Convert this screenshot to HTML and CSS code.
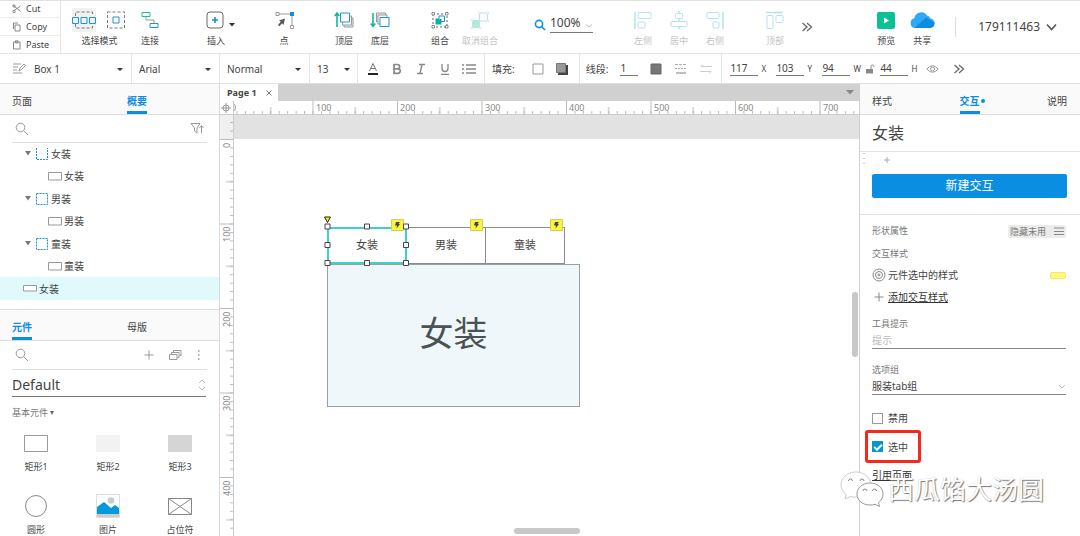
FILE: index.html
```html
<!DOCTYPE html>
<html lang="zh-CN">
<head>
<meta charset="utf-8">
<title>Page 1</title>
<link rel="stylesheet" href="styles.css">
</head>
<body>
<div class="app">
  <header class="ribbon">
    <div class="clipboard">
      <button class="clip"><svg width="10" height="10" viewBox="0 0 10 10"><path d="M1.500 1.500L8.500 7.500M1.500 7L8.500 2"/><circle cx="2" cy="2" r="1.200"/><circle cx="2" cy="7.500" r="1.200"/></svg>Cut</button>
      <button class="clip"><svg width="10" height="10" viewBox="0 0 10 10"><path d="M3 3h5v6H3zM1.500 7V1H6"/></svg>Copy</button>
      <button class="clip"><svg width="10" height="10" viewBox="0 0 10 10"><path d="M1.500 2h6.500v7H1.500zM3.500 .8h2.500V3H3.500z"/></svg>Paste</button>
    </div>
    <button class="tool tool-mode">
      <span class="icons">
        <svg class="pressed" width="24" height="24" viewBox="0 0 24 24" fill="none"><path d="M3.500 8V4h17v4M3.500 16v4h17v-4" stroke="#777" stroke-dasharray="3 2"/><g stroke="#1d93e3" fill="#f1f1f1"><path d="M.5 9.500h6v6h-6zM9 9.500h6v6H9zM17.500 9.500h6v6h-6z"/></g></svg>
        <svg width="24" height="24" viewBox="0 0 24 24" fill="none"><path d="M3.500 4h17v16h-17z" stroke="#777" stroke-dasharray="3 2"/><path d="M9 9h6v6H9z" stroke="#1d93e3"/></svg>
      </span>
      选择模式
    </button>
    <button class="tool gap-xs"><svg width="24" height="24" viewBox="0 0 24 24" fill="none"><path d="M4 4.500h8v4H4z" stroke="#12c19c"/><path d="M8 9v3h8v3" stroke="#999"/><path d="M12 15.500h8v4h-8z" stroke="#1d93e3"/></svg>连接</button>
    <button class="tool tool-narrow"><svg width="24" height="24" viewBox="0 0 24 24" fill="none"><rect x="3" y="4" width="16" height="16" rx="3" stroke="#666"/><path d="M11 9v6M8 12h6" stroke="#0e8fe3" stroke-width="1.600"/></svg>插入</button>
    <svg class="caret" width="8" height="4" viewBox="0 0 8 4"><path d="M1 0h6L4 3.500z"/></svg>
    <button class="tool"><svg width="24" height="24" viewBox="0 0 24 24" fill="none"><path d="M6 6h14v13" stroke="#999"/><path d="M4 4.500h3v3H4zM18.500 17.500h3v3h-3z" fill="#fff" stroke="#999"/><path d="M18 4h4v4h-4z" fill="#0e8fe3"/><path d="M13 10.500l-6 2 1.800 1.200L6 17l1.200 1.200 3-3L11.500 17z" fill="#555"/></svg>点</button>
    <button class="tool gap-md"><svg width="24" height="24" viewBox="0 0 24 24" fill="none"><path d="M5 19V6M2.800 8L5 5l2.200 3" stroke="#12b893" stroke-width="1.600"/><path d="M12 10h9v9h-9z" fill="#eee" stroke="#999"/><path d="M10.500 8h9v9h-9z" fill="#fff" stroke="#999"/><path d="M8.500 5h9v9h-9z" fill="#fff" stroke="#1d93e3"/></svg>顶层</button>
    <button class="tool"><svg width="24" height="24" viewBox="0 0 24 24" fill="none"><path d="M5 5v13M2.800 15.500L5 18.500l2.200-3" stroke="#12b893" stroke-width="1.600"/><path d="M8.500 5h9v9h-9z" fill="#eee" stroke="#999"/><path d="M10 7h9v9h-9z" fill="#fff" stroke="#999"/><path d="M12 9.500h9v9h-9z" fill="#fff" stroke="#1d93e3"/></svg>底层</button>
    <button class="tool gap-md"><svg width="24" height="24" viewBox="0 0 24 24" fill="none"><path d="M5 6h14v13H5z" stroke="#666" stroke-dasharray="2 2"/><path d="M4 4.500h2.500V7H4zM17.500 4.500H20V7h-2.500zM4 17.500h2.500V20H4zM17.500 17.500H20V20h-2.500z" fill="#fff" stroke="#888"/><path d="M7.500 10.500h6v6h-6z" fill="#00b894"/><path d="M11 8h5.500v5.500H11z" fill="#fff" stroke="#1d93e3"/><path d="M11.500 11h2v2h-2z" fill="#0e8fe3"/></svg>组合</button>
    <button class="tool gap-xs" disabled><svg width="24" height="24" viewBox="0 0 24 24" fill="none"><path d="M4 12h8v8H4z" fill="#00b894"/><path d="M11.500 5h8v8h-8z" fill="#fff" stroke="#1d93e3"/><path d="M3 11h2v2H3zM3 19h2v2H3zM11 19h2v2h-2zM10.500 4h2v2h-2zM18.500 4h2v2h-2zM18.500 12h2v2h-2z" fill="#fff" stroke="#999" stroke-width=".7"/></svg>取消组合</button>
    <div class="zoom">
      <svg width="12" height="12" viewBox="0 0 12 12" fill="none" stroke="#0e8fe3" stroke-width="1.600"><circle cx="5" cy="5" r="3.600"/><path d="M7.800 7.800L11 11"/></svg>
      <label class="zoom-field"><select aria-label="缩放"><option>100%</option></select><svg width="8" height="4" viewBox="0 0 8 4" fill="none" stroke="#bbb"><path d="M1 .5l3 2.500 3-2.500"/></svg></label>
    </div>
    <button class="tool align-first" disabled><svg width="24" height="24" viewBox="0 0 24 24" fill="none"><path d="M4 4v17" stroke="#00b894" stroke-width="1.600"/><g stroke="#1d93e3"><rect x="7" y="4.500" width="13" height="6" rx="1"/><rect x="7" y="14" width="7" height="6" rx="1"/></g></svg>左侧</button>
    <button class="tool" disabled><svg width="24" height="24" viewBox="0 0 24 24" fill="none"><path d="M12 3v18" stroke="#00b894" stroke-width="1.600"/><g stroke="#1d93e3" fill="#fff"><rect x="8.500" y="5.500" width="7" height="5" rx="1"/><rect x="4" y="13.500" width="16" height="5" rx="1"/></g></svg>居中</button>
    <button class="tool" disabled><svg width="24" height="24" viewBox="0 0 24 24" fill="none"><path d="M20 4v17" stroke="#00b894" stroke-width="1.600"/><g stroke="#1d93e3"><rect x="4" y="4.500" width="12" height="6" rx="1"/><rect x="10" y="14" width="6" height="6" rx="1"/></g></svg>右侧</button>
    <button class="tool gap-md" disabled><svg width="24" height="24" viewBox="0 0 24 24" fill="none"><path d="M3 4.500h17" stroke="#00b894" stroke-width="1.600"/><g stroke="#1d93e3"><rect x="4" y="7.500" width="6" height="13" rx="1"/><rect x="13" y="7.500" width="7" height="7" rx="1"/></g></svg>顶部</button>
    <button class="more" aria-label="更多"><svg width="12" height="10" viewBox="0 0 12 10"><path d="M1.500 1L6 5 1.500 9M6 1l4.500 4L6 9"/></svg></button>
    <button class="tool push"><svg width="24" height="24" viewBox="0 0 24 24"><rect x="3" y="4" width="18" height="17" rx="2" fill="#0cc196"/><path d="M10 9.500v6l5-3z" fill="#fff"/></svg>预览</button>
    <button class="tool"><svg width="26" height="24" viewBox="0 0 26 24"><path d="M6 20a5 5 0 0 1-.7-9.800A7 7 0 0 1 18 7.500a5 5 0 0 1 3.500 3A4.800 4.800 0 0 1 21 20z" fill="#2fa8f7"/><path d="M5.500 20L17 9.500l8.500 5A4.800 4.800 0 0 1 21 20z" fill="#0b8de3"/></svg>共享</button>
    <button class="account">179111463<svg width="11" height="8" viewBox="0 0 11 8" fill="none" stroke="#555" stroke-width="1.600"><path d="M1 1.500l4.500 5 4.500-5"/></svg></button>
  </header>

  <div class="format">
    <label class="pick pick-style"><svg width="14" height="13" viewBox="0 0 14 13" fill="none" stroke="#999"><path d="M1 2h8M1 5h5M1 8h4M1 11h9M7 9l1-3 4-4 1.500 1.500-4 4z"/></svg><select aria-label="样式"><option>Box 1</option></select><svg class="caret" width="8" height="4" viewBox="0 0 8 4"><path d="M1 0h6L4 3z"/></svg></label>
    <label class="pick pick-font"><select aria-label="字体"><option>Arial</option></select><svg class="caret" width="8" height="4" viewBox="0 0 8 4"><path d="M1 0h6L4 3z"/></svg></label>
    <label class="pick pick-weight"><select aria-label="字形"><option>Normal</option></select><svg class="caret" width="8" height="4" viewBox="0 0 8 4"><path d="M1 0h6L4 3z"/></svg></label>
    <label class="pick pick-size"><select aria-label="字号"><option>13</option></select><svg class="caret" width="8" height="4" viewBox="0 0 8 4"><path d="M1 0h6L4 3z"/></svg></label>
    <div class="text-tools">
      <button aria-label="颜色"><svg width="14" height="14" viewBox="0 0 14 14" fill="none" stroke="#777"><path d="M3.500 9L7 1.500 10.500 9M4.800 6.500h4.400"/><path d="M2 12h10" stroke="#222" stroke-width="2"/></svg></button>
      <button aria-label="粗体"><svg width="14" height="14" viewBox="0 0 14 14" fill="none" stroke="#888" stroke-width="1.700"><path d="M4 2.500h3.500a2 2 0 0 1 0 4.300H4zM4 6.800h4a2.200 2.200 0 0 1 0 4.500H4z"/></svg></button>
      <button aria-label="斜体"><svg width="14" height="14" viewBox="0 0 14 14" fill="none" stroke="#888" stroke-width="1.400"><path d="M5 2.500h6M3 11.500h6M8 2.500l-2 9"/></svg></button>
      <button aria-label="下划线"><svg width="14" height="14" viewBox="0 0 14 14" fill="none" stroke="#888" stroke-width="1.300"><path d="M4 2v4.500a3 3 0 0 0 6 0V2M3 12.300h8"/></svg></button>
      <button aria-label="列表"><svg width="14" height="14" viewBox="0 0 14 14" fill="none" stroke="#888" stroke-width="1.400"><path d="M0 3h2M4 3h10M0 7h2M4 7h10M0 11h2M4 11h10"/></svg></button>
    </div>
    <div class="fill-tools">填充:
      <button aria-label="填充颜色"><svg width="12" height="12" viewBox="0 0 12 12"><path d="M1 1h10v10H1z" fill="#fff" stroke="#999"/></svg></button>
      <button aria-label="阴影"><svg width="12" height="12" viewBox="0 0 12 12"><path d="M2 2h10v10H2z" fill="#444"/><path d="M.5 .5h9v9h-9z" fill="#999" stroke="#777"/></svg></button>
    </div>
    <div class="line-tools"><label for="line-width">线段:</label>
      <input id="line-width" class="line-width" value="1">
      <button aria-label="线条颜色"><svg width="12" height="12" viewBox="0 0 12 12"><path d="M1 1h10v10H1z" fill="#777" stroke="#666"/></svg></button>
      <button aria-label="线型"><svg width="14" height="12" viewBox="0 0 14 12" fill="none" stroke="#aaa"><path d="M1 1.500h12" stroke-dasharray="3 1"/><path d="M1 5.500h12" stroke-dasharray="2 1"/><path d="M2 10h10" stroke-width="1.500"/></svg></button>
      <button aria-label="箭头"><svg width="12" height="12" viewBox="0 0 12 12" fill="none" stroke="#ccc"><path d="M12 3.500H1l2-2M0 8.500h11l-2 2"/></svg></button>
    </div>
    <div class="geometry">
      <label><input value="117"><span>X</span></label>
      <label><input value="103"><span>Y</span></label>
      <label><input value="94"><span>W</span></label>
      <svg class="lock" width="9" height="10" viewBox="0 0 9 10"><path d="M0 5h7v4.500H0z" fill="#888"/><path d="M5 5V2.500a1.500 1.500 0 0 1 3 0V3" fill="none" stroke="#888"/></svg>
      <label><input value="44"><span>H</span></label>
      <button aria-label="可见"><svg width="13" height="10" viewBox="0 0 13 10" fill="none" stroke="#999"><path d="M.8 5Q6.500-1.500 12.200 5 6.500 11.500.8 5z"/><circle cx="6.500" cy="5" r="2"/></svg></button>
      <button class="format-more" aria-label="更多"><svg width="12" height="10" viewBox="0 0 12 10" fill="none" stroke="#666" stroke-width="1.300"><path d="M1.500 1L6 5 1.500 9M6 1l4.500 4L6 9"/></svg></button>
    </div>
  </div>

  <main class="workspace">
    <aside class="left">
      <nav class="tabs"><a href="#pages">页面</a><a href="#outline" class="on">概要</a></nav>
      <section class="outline">
        <div class="search"><svg width="14" height="14" viewBox="0 0 14 14"><circle cx="5.500" cy="5.500" r="4.300"/><path d="M8.700 8.700L13 13"/></svg><svg class="push" width="14" height="13" viewBox="0 0 14 13"><path d="M1 1.500h9L7 6v5L4.500 9V6zM11.500 11V4M9.500 6l2-2.500 2 2.500"/></svg></div>
        <ul class="tree">
          <li class="group first"><svg class="twist" width="6" height="5" viewBox="0 0 6 5"><path d="M0 0h6L3 4.500z"/></svg><svg width="12" height="12" viewBox="0 0 12 12"><path class="dash" d="M.5 0v11.500h11V0"/></svg>女装</li>
          <li class="leaf"><svg width="14" height="9" viewBox="0 0 14 9"><path class="box" d="M.5 .5h13v7.500H.5z"/></svg>女装</li>
          <li class="group"><svg class="twist" width="6" height="5" viewBox="0 0 6 5"><path d="M0 0h6L3 4.500z"/></svg><svg width="12" height="12" viewBox="0 0 12 12"><path class="dash" d="M.5 .5h11v11H.5z"/></svg>男装</li>
          <li class="leaf"><svg width="14" height="9" viewBox="0 0 14 9"><path class="box" d="M.5 .5h13v7.500H.5z"/></svg>男装</li>
          <li class="group"><svg class="twist" width="6" height="5" viewBox="0 0 6 5"><path d="M0 0h6L3 4.500z"/></svg><svg width="12" height="12" viewBox="0 0 12 12"><path class="dash" d="M.5 .5h11v11H.5z"/></svg>童装</li>
          <li class="leaf"><svg width="14" height="9" viewBox="0 0 14 9"><path class="box" d="M.5 .5h13v7.500H.5z"/></svg>童装</li>
          <li class="root selected"><svg width="14" height="7" viewBox="0 0 14 7"><path class="box" d="M.5 .5h13v5.500H.5z"/></svg>女装</li>
        </ul>
      </section>
      <nav class="tabs"><a href="#widgets" class="on">元件</a><a href="#masters">母版</a></nav>
      <section class="library">
        <div class="search"><svg width="14" height="14" viewBox="0 0 14 14"><circle cx="5.500" cy="5.500" r="4.300"/><path d="M8.700 8.700L13 13"/></svg>
          <div class="search-actions push"><svg width="10" height="10" viewBox="0 0 10 10"><path d="M5 .5v9M.5 5h9"/></svg><svg width="13" height="10" viewBox="0 0 13 10"><path d="M.5 4.500h7.500v5H.5zM2.500 4V2.500H10v5H8.500M4.500 2V.5H12v5h-1.500"/></svg><svg width="4" height="10" viewBox="0 0 4 10"><path d="M1 1h1.500M1 5h1.500M1 9h1.500" stroke-width="1.600"/></svg></div></div>
        <label class="lib-pick"><select aria-label="元件库"><option>Default</option></select><svg width="8" height="12" viewBox="0 0 8 12" fill="none" stroke="#bbb"><path d="M1 4l3-3 3 3M1 8l3 3 3-3"/></svg></label>
        <h3 class="lib-head">基本元件<svg width="4" height="4" viewBox="0 0 4 4"><path d="M0 0h4L2 4z" fill="#666"/></svg></h3>
        <div class="widgets">
          <div class="widget"><svg width="24" height="24" viewBox="0 0 24 24"><path d="M.5 4.500h23v16H.5z" fill="#fff" stroke="#999"/></svg>矩形1</div>
          <div class="widget"><svg width="24" height="24" viewBox="0 0 24 24"><path d="M0 4h24v17H0z" fill="#f2f2f2"/></svg>矩形2</div>
          <div class="widget"><svg width="24" height="24" viewBox="0 0 24 24"><path d="M0 4h24v17H0z" fill="#d5d5d5"/></svg>矩形3</div>
          <div class="widget"><svg width="24" height="24" viewBox="0 0 24 24"><circle cx="12" cy="12" r="10.500" fill="#fff" stroke="#888"/></svg>圆形</div>
          <div class="widget"><svg width="24" height="24" viewBox="0 0 24 24"><path d="M.5 .5h23v23H.5z" fill="#fff" stroke="#ddd"/><circle cx="15" cy="6.500" r="3.300" fill="#ccc"/><path d="M1 13l7-5 7 6 4-3 4 3v6H1z" fill="#0799dd"/><path d="M1 20h22v3H1z" fill="#ccc"/></svg>图片</div>
          <div class="widget"><svg width="24" height="24" viewBox="0 0 24 24"><path d="M.5 4.500h23v16H.5zL23.500 20.500M23.500 4.500L.5 20.500" fill="none" stroke="#888"/></svg>占位符</div>
        </div>
      </section>
    </aside>

    <section class="center">
      <div class="pages"><div class="page-tab">Page 1<button aria-label="关闭"><svg width="6" height="6" viewBox="0 0 6 6"><path d="M.5 .5l5 5M5.500 .5l-5 5" stroke="#777"/></svg></button></div><svg class="pages-menu" width="8" height="5" viewBox="0 0 8 5"><path d="M0 0h8L4 4.500z" fill="#888"/></svg></div>
      <div class="board">
        <div class="origin"><svg width="10" height="10" viewBox="0 0 10 10" fill="none" stroke="#999"><circle cx="5" cy="5" r="3"/><path d="M5 0v10M0 5h10"/></svg></div>
        <svg class="ruler-x" width="100%" height="13">
          <defs>
            <pattern id="tx" width="8.450" height="13" patternUnits="userSpaceOnUse" x="-6"><path d="M.5 10v3" stroke="#bbb"/></pattern>
            <pattern id="tx5" width="84.500" height="13" patternUnits="userSpaceOnUse" x="-6"><path d="M.5 0v13M42.700 6v7" stroke="#bbb"/></pattern>
          </defs>
          <rect width="100%" height="13" fill="url(#tx)"/><rect width="100%" height="13" fill="url(#tx5)"/>
          <g class="marks"><text x="-3" y="10">0</text><text x="82" y="10">100</text><text x="166" y="10">200</text><text x="251" y="10">300</text><text x="335" y="10">400</text><text x="420" y="10">500</text><text x="504" y="10">600</text><text x="589" y="10">700</text></g>
        </svg>
        <svg class="ruler-y" width="13" height="100%">
          <defs>
            <pattern id="ty" width="13" height="8.450" patternUnits="userSpaceOnUse" y="24"><path d="M10 .5h3" stroke="#bbb"/></pattern>
            <pattern id="ty5" width="13" height="84.500" patternUnits="userSpaceOnUse" y="24"><path d="M0 .5h13M6 42.700h7" stroke="#bbb"/></pattern>
          </defs>
          <rect width="13" height="24" fill="#f0f0f0"/>
          <rect width="13" height="100%" fill="url(#ty)"/><rect width="13" height="100%" fill="url(#ty5)"/>
          <g class="marks"><text transform="translate(10 33) rotate(-90)">0</text><text transform="translate(10 127) rotate(-90)">100</text><text transform="translate(10 212) rotate(-90)">200</text><text transform="translate(10 296) rotate(-90)">300</text><text transform="translate(10 381) rotate(-90)">400</text></g>
        </svg>
        <div class="stage">
          <div class="shape shape-panel">女装</div>
          <div class="shape shape-tab tab-2">男装</div>
          <div class="shape shape-tab tab-3">童装</div>
          <div class="shape shape-tab tab-1">女装</div>
          <svg class="bolt bolt-1" viewBox="0 0 13 12"><use href="#bolt"/></svg>
          <svg class="bolt bolt-2" viewBox="0 0 13 12"><g id="bolt"><path d="M.5 .5h12v11H.5z" fill="#fbf43c" stroke="#d3ce5c"/><path d="M5 3h4L7.500 5H9L5.500 9.500 6 6.500H4z" fill="#444"/></g></svg>
          <svg class="bolt bolt-3" viewBox="0 0 13 12"><use href="#bolt"/></svg>
          <svg class="handles" viewBox="0 0 86 52"><path d="M.5 1h6l-3 5.500z" fill="#f7ea1a" stroke="#222"/><g fill="#fff" stroke="#444"><path d="M1 8h5v5H1zM40.500 8h5v5h-5zM79.500 8h5v5h-5zM1 26.500h5v5H1zM79.500 26.500h5v5h-5zM1 44.500h5v5H1zM40.500 44.500h5v5h-5zM79.500 44.500h5v5h-5z"/></g></svg>
          <div class="bar bar-y"></div>
          <div class="bar bar-x"></div>
        </div>
      </div>
    </section>

    <aside class="right">
      <nav class="tabs tabs-right"><a href="#style">样式</a><a href="#interactions" class="on dot">交互</a><a href="#notes">说明</a></nav>
      <h2 class="name">女装</h2>
      <div class="actions">
        <div class="adder"><svg width="2" height="14" viewBox="0 0 2 14"><path d="M1 0v14" stroke="#999" stroke-dasharray="1 4"/></svg><svg width="6" height="6" viewBox="0 0 6 6"><path d="M3 0v6M0 3h6" stroke="#aaa"/></svg></div>
        <button class="primary">新建交互</button>
      </div>
      <div class="props">
        <div class="row"><h3>形状属性</h3><button class="chip">隐藏未用<svg width="10" height="8" viewBox="0 0 10 8"><path d="M0 1h10M0 4.500h10M0 7.500h10" stroke="#888"/></svg></button></div>
        <h3>交互样式</h3>
        <div class="row item"><svg width="14" height="14" viewBox="0 0 14 14" fill="none" stroke="#888"><circle cx="7" cy="7" r="6"/><circle cx="7" cy="7" r="3.500"/><circle cx="7" cy="7" r="1"/></svg>元件选中的样式<span class="swatch"></span></div>
        <div class="row item"><svg width="14" height="14" viewBox="0 0 14 14" fill="none" stroke="#888"><path d="M7 2.500v9M2.500 7h9"/></svg><a href="#add">添加交互样式</a></div>
        <label class="field" for="tip">工具提示</label>
        <input id="tip" class="control" placeholder="提示">
        <label class="field" for="grp">选项组</label>
        <div class="control control-pick"><select id="grp"><option>服装tab组</option></select><svg width="8" height="5" viewBox="0 0 8 5" fill="none" stroke="#bbb"><path d="M1 1l3 3 3-3"/></svg></div>
        <label class="check"><input type="checkbox">禁用</label>
        <label class="check marked"><input type="checkbox" checked>选中</label>
        <a class="ref" href="#ref">引用页面</a>
      </div>
    </aside>
  </main>
  <div class="watermark"><svg width="44" height="38" viewBox="0 0 44 38"><g fill="#fff" stroke="#999"><path d="M16 2C7 2 1 8 1 15c0 4 2 7 5 9.500L5 29l5.500-2.500c2 .6 4 .8 6 .6C28 27 32 21 31 14 30 7 24 2 16 2z" stroke="#ccc"/><path d="M30 13c-8 0-13 5-13 11s5 11 13 11c2 0 3.500-.2 5-.7l4.500 2.200-1-3.800C41 30.500 43 28 43 24c0-6-5-11-13-11z"/></g><g fill="none" stroke="#888"><path d="M8.500 11a2 2 0 0 1 4 0M20 11a2 2 0 0 1 4 0M23 21a2 2 0 0 1 4 0M32.500 21a2 2 0 0 1 4 0"/></g></svg>西瓜馅大汤圆</div>
</div>
</body>
</html>
```
FILE: styles.css
```css
* { box-sizing: border-box; }

body {
  margin: 0;
  font: 10px/14px "Noto Sans", "Noto Sans CJK SC", sans-serif;
  color: #444;
  background: #fff;
}

svg { display: block; flex: none; }

button, select, input {
  font: inherit;
  color: inherit;
  border: 0;
  padding: 0;
  margin: 0;
  background: none;
  border-radius: 0;
  min-width: 0;
}

select { appearance: none; flex: 1; }
h2, h3, ul { margin: 0; padding: 0; font-weight: normal; }
.push { margin-left: auto; }
.caret { fill: #333; }

.app {
  position: relative;
  display: flex;
  flex-direction: column;
  height: 100vh;
  overflow: hidden;
}

/* ribbon */
.ribbon {
  display: flex;
  flex: none;
  align-items: stretch;
  border-top: 1px solid #e2e2e2;
  border-bottom: 1px solid #e4e4e4;
}

.clipboard {
  display: flex;
  flex-direction: column;
  width: 61px;
  border-right: 1px solid #e4e4e4;
}

.clip {
  display: flex;
  align-items: center;
  gap: 4px;
  height: 18px;
  padding-left: 12px;
  font-size: 9px;
  border-bottom: 1px solid #eee;
}

.clip:first-child { height: 17px; }
.clip:last-child { height: 17px; border-bottom: 0; }
.clip svg { fill: none; stroke: #888; }

.tool {
  display: flex;
  flex-direction: column;
  align-items: center;
  gap: 2px;
  width: 36px;
  padding-top: 7px;
  font-size: 9px;
  line-height: 14px;
  white-space: nowrap;
}

.tool:disabled { color: #c4c4c4; }
.tool:disabled svg { opacity: 0.3; }
.tool-mode { width: 57px; margin-left: 10px; }
.tool-narrow { width: 24px; margin-left: 36px; }
.icons { display: flex; gap: 8px; }
.pressed { background: #f1f1f1; }
.gap-xs { margin-left: 4px; }
.gap-md { margin-left: 24px; }
.align-first { margin-left: 32px; }
.ribbon > .caret { margin-top: 22px; }
.ribbon > .caret + .tool { margin-left: 30px; }

.zoom {
  display: flex;
  align-items: flex-start;
  gap: 4px;
  width: 59px;
  margin-left: 36px;
  padding-top: 14px;
}

.zoom > svg { margin-top: 4px; }

.zoom-field {
  display: flex;
  align-items: center;
  flex: 1;
  font-size: 12px;
  line-height: 16px;
  border-bottom: 1px solid #777;
  padding-bottom: 1px;
}

.zoom-field svg { margin-top: 6px; }

.more { width: 12px; margin-left: 8px; }
.more svg { fill: none; stroke: #666; stroke-width: 1.3; }

.account {
  display: flex;
  align-items: center;
  align-self: center;
  gap: 6px;
  height: 20px;
  margin-left: 15px;
  padding: 0 23px 0 22px;
  font-size: 12px;
  border-left: 1px solid #ddd;
}

/* format bar */
.format {
  display: flex;
  flex: none;
  height: 30px;
  border-bottom: 1px solid #e0e0e0;
  white-space: nowrap;
}

.format > * {
  display: flex;
  align-items: center;
  border-right: 1px solid #e4e4e4;
}

.pick { padding: 0 7px; }
.pick .caret { margin-top: 2px; }
.pick-style { width: 132px; padding-left: 12px; gap: 8px; }
.pick-font { width: 88px; }
.pick-weight { width: 90px; }
.pick-size { width: 48px; padding-right: 6px; }
.text-tools { gap: 10px; padding: 0 8px; }
.fill-tools { gap: 12px; padding: 0 11px 0 7px; }
.fill-tools button:first-of-type { margin-left: 5px; }
.line-tools { gap: 12px; padding: 0 9px 0 6px; }
.line-width { width: 18px; border-bottom: 1px solid #777; }
.format .geometry { flex: 1; border-right: 0; padding-left: 8px; }
.geometry label { display: flex; align-items: center; }
.geometry input { width: 28px; border-bottom: 1px solid #777; }
.geometry span { width: 18px; padding-left: 3px; font-size: 8px; }
.geometry label:nth-of-type(3) span { width: 16px; }
.geometry .lock { margin-right: 5px; }
.format-more { margin-left: 14px; }

/* workspace */
.workspace { display: flex; flex: 1; min-height: 0; }
.left, .right { display: flex; flex-direction: column; width: 220px; flex: none; }
.left { border-right: 1px solid #d8d8d8; }

.tabs {
  display: grid;
  grid-template-columns: 115px 1fr;
  flex: none;
  height: 31px;
  padding-left: 12px;
  background: #fafafa;
  border-bottom: 1px solid #dcdcdc;
}

.tabs a {
  justify-self: start;
  padding-top: 10px;
  color: #444;
  text-decoration: none;
  border-bottom: 3px solid transparent;
}

.tabs .on { color: #0b8de3; font-weight: bold; border-bottom-color: #0b8de3; }

.search {
  display: flex;
  align-items: center;
  height: 29px;
  margin: 0 12px;
  padding: 0 3px;
  border-bottom: 1px solid #e0e0e0;
}

.outline .search { height: 28px; }
.search svg { fill: none; stroke: #999; }
.search-actions { display: flex; align-items: center; gap: 15px; padding-right: 3px; }

.tree { list-style: none; padding-bottom: 9px; border-bottom: 1px solid #dcdcdc; overflow: hidden; }
.tree li { display: flex; align-items: center; gap: 3px; height: 23px; }
.tree .group { padding-left: 25px; }
.tree .first { margin-top: -1px; }
.tree .leaf { height: 22px; padding-left: 48px; gap: 2px; }
.tree .root { padding-left: 23px; gap: 2px; }
.tree .selected { background: #e0f9fa; }
.twist { fill: #777; margin-right: 2px; }
.dash { fill: none; stroke: #1590e0; stroke-dasharray: 2 1; }
.box { fill: #fff; stroke: #999; }

.library { flex: 1; min-height: 0; overflow: hidden; }

.lib-pick {
  display: flex;
  align-items: center;
  height: 27px;
  margin: 0 13px 0 12px;
  padding-top: 4px;
  font-size: 14px;
  line-height: 20px;
  border-bottom: 1px solid #777;
}

.lib-head { display: flex; align-items: center; gap: 2px; margin: 9px 12px 0; font-size: 9px; color: #777; }

.widgets {
  display: grid;
  grid-template-columns: repeat(3, 1fr);
  row-gap: 20px;
  padding: 11px 3px 0 0;
}

.widget {
  display: flex;
  flex-direction: column;
  align-items: center;
  gap: 5px;
  font-size: 9px;
}

/* center */
.center { display: flex; flex-direction: column; flex: 1; min-width: 0; }
.pages { display: flex; align-items: center; height: 17px; background: #d0d0d0; padding-right: 5px; flex: none; }

.page-tab {
  display: flex;
  align-items: center;
  justify-content: space-between;
  width: 58px;
  height: 17px;
  padding: 0 6px 0 7px;
  font-size: 9px;
  font-weight: bold;
  background: #fff;
}

.pages-menu { margin-left: auto; }

.board {
  display: grid;
  grid-template-columns: 14px 1fr;
  grid-template-rows: 14px 1fr;
  flex: 1;
  min-height: 0;
}

.origin, .ruler-y { border-right: 1px solid #ccc; }
.origin, .ruler-x { border-bottom: 1px solid #ccc; }
.origin { padding: 2px 1px; }
.ruler-x { height: 14px; }
.ruler-y { width: 14px; }
.marks { font-size: 9px; fill: #888; }

.stage {
  position: relative;
  overflow: hidden;
  border-top: 24px solid #e2e2e2;
}

.shape {
  position: absolute;
  display: flex;
  align-items: center;
  justify-content: center;
  border: 1px solid #8c8c8c;
  background: #fff;
}

.shape-panel {
  left: 93px;
  top: 125px;
  width: 253px;
  height: 143px;
  padding-bottom: 6px;
  font-size: 34px;
  line-height: 48px;
  color: #4a5254;
  background: #f0f7fa;
  border-color: #97a1a4;
}

.shape-tab { top: 88px; width: 80px; height: 37px; padding-bottom: 2px; font-size: 11px; }
.tab-1 { left: 93px; border: 2px solid #3fd0cc; }
.tab-2 { left: 172px; }
.tab-3 { left: 251px; }

.bolt { position: absolute; top: 80px; width: 13px; height: 12px; }
.bolt-1 { left: 157px; }
.bolt-2 { left: 236px; }
.bolt-3 { left: 316px; }
.handles { position: absolute; left: 90px; top: 77px; width: 86px; height: 52px; }

.bar { position: absolute; background: #c8c8c8; border-radius: 3px; }
.bar-y { right: 1px; top: 153px; width: 6px; height: 65px; }
.bar-x { left: 280px; bottom: 2px; width: 66px; height: 6px; }

/* right */
.right { border-left: 1px solid #d0d0d0; width: 221px; }
.tabs-right { display: flex; justify-content: space-between; padding-right: 13px; }
.dot { position: relative; }

.dot::after {
  content: "";
  position: absolute;
  left: 21px;
  top: 15px;
  width: 4px;
  height: 4px;
  border-radius: 50%;
  background: #0b8de3;
}

.name { padding: 8px 12px; font-size: 16px; line-height: 20px; border-bottom: 1px solid #e4e4e4; }
.actions { padding-bottom: 16px; border-bottom: 1px solid #e4e4e4; }
.adder { display: flex; align-items: center; gap: 19px; padding: 1px 3px 7px; }

.primary {
  display: block;
  width: calc(100% - 25px);
  height: 24px;
  margin-left: 12px;
  font-size: 12px;
  color: #fff;
  background: #0a8ee2;
  border-radius: 2px;
}

.props { padding: 9px 14px 0 12px; }
.props h3, .field { display: block; font-size: 9px; color: #777; }
.row { display: flex; align-items: center; }
.chip { display: flex; align-items: center; gap: 8px; margin-left: auto; padding: 0 2px; font-size: 9px; line-height: 13px; color: #777; background: #ececec; border-radius: 2px; }
.row + h3 { margin: 9px 0 3px; }
.item { height: 22px; gap: 2px; }
.item a, .ref { color: #333; }
.swatch { width: 16px; height: 7px; margin-left: auto; background: #fff87a; border: 1px solid #f0ea6a; border-radius: 2px; }
.field { margin-top: 9px; }
.control { display: flex; width: 100%; height: 18px; padding-top: 1px; border-bottom: 1px solid #888; outline: 0; }
.control::placeholder { color: #bbb; }
.control + .field { margin-top: 14px; }
.control-pick { align-items: center; }

.check { display: flex; align-items: center; gap: 5px; margin: 16px 0 0; }

.check input {
  appearance: none;
  width: 11px;
  height: 11px;
  border: 1px solid #999;
  background: #fff;
}

.check input:checked {
  border-color: #0799c6;
  background: #0799c6;
  display: grid;
  place-items: center;
}

.check input:checked::before {
  content: "";
  width: 6px;
  height: 3px;
  border: solid #fff;
  border-width: 0 0 2px 2px;
  transform: rotate(-45deg);
}

.marked {
  width: 56px;
  height: 33px;
  margin: 5px 0 0 -7px;
  padding-left: 4px;
  border: 3px solid #f8271c;
  border-radius: 3px;
}

.ref { display: inline-block; margin-top: 5px; }

.watermark {
  position: absolute;
  right: 36px;
  bottom: 28px;
  display: flex;
  align-items: center;
  gap: 4px;
  font-size: 26px;
  line-height: 38px;
  color: #fff;
  text-shadow: 1px 1px 1px #777, 0 0 1px #bbb;
  pointer-events: none;
}
```
